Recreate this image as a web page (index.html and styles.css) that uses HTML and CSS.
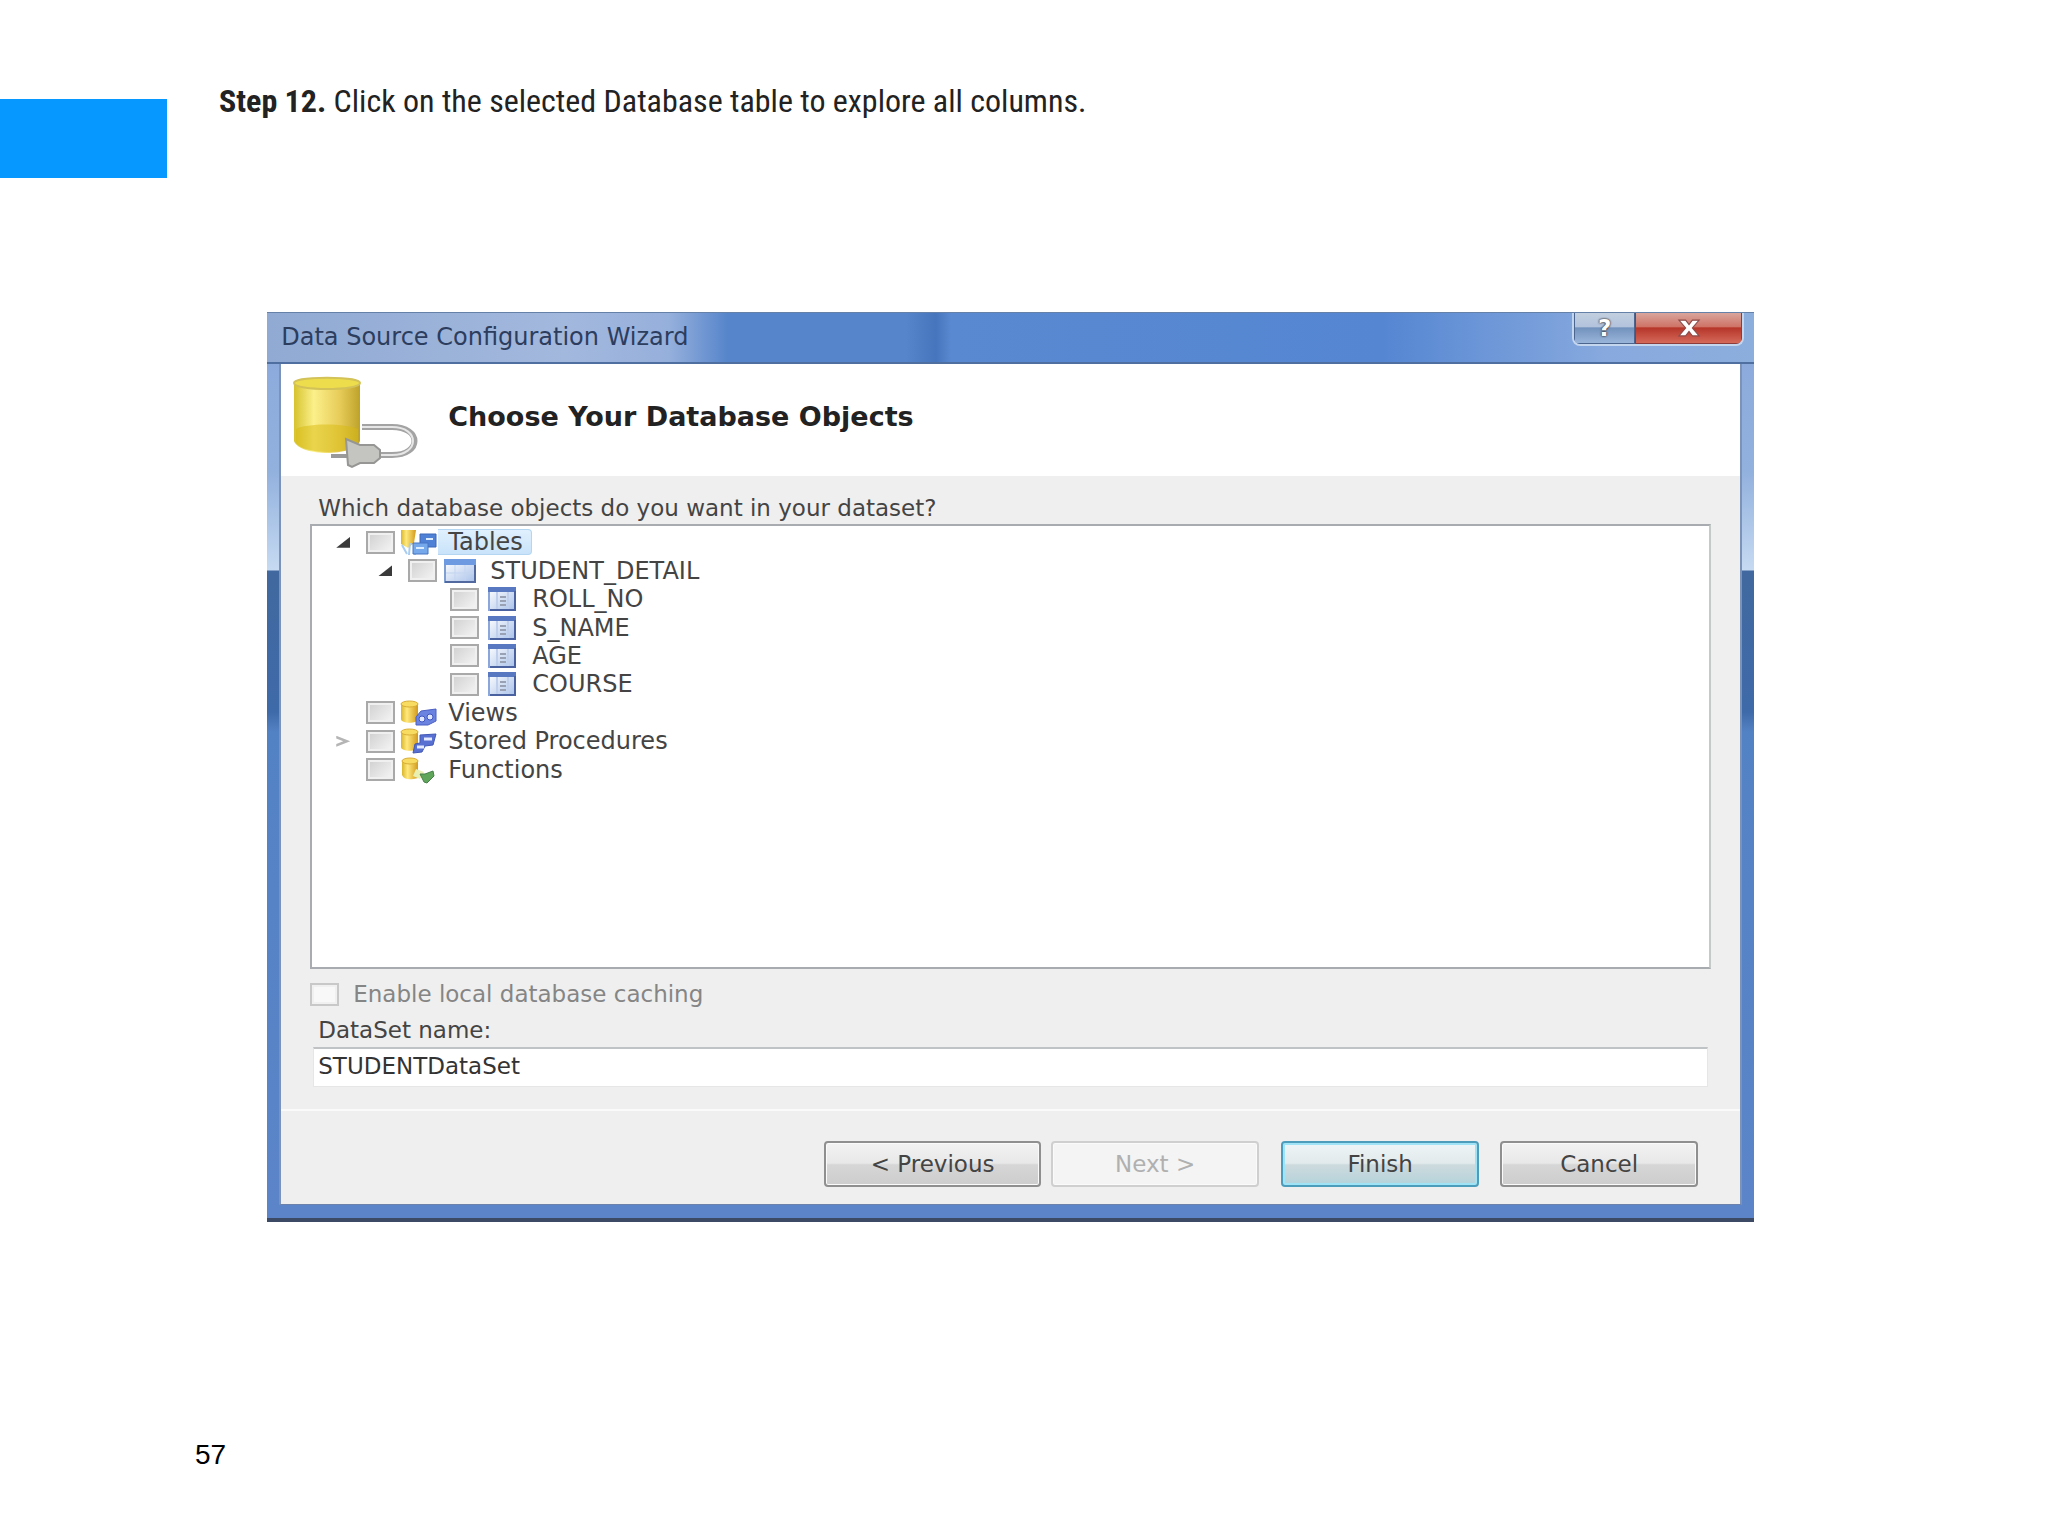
FILE: index.html
```
<!DOCTYPE html>
<html lang="en">
  <head>
    <meta charset="UTF-8" />
    <meta name="viewport" content="width=device-width, initial-scale=1.0" />
    <title>Step 12</title>
    <link rel="stylesheet" href="styles.css">
  </head>
  <body>
    <!-- shared tree icons -->
    <svg class="sprite" aria-hidden="true">
      <defs>
        <linearGradient id="gold" x1="0" x2="1">
          <stop offset="0" stop-color="#d9b52c" />
          <stop offset="0.35" stop-color="#ffe97c" />
          <stop offset="1" stop-color="#d39a1c" />
        </linearGradient>
        <linearGradient id="pane" x1="0" x2="1" y2="1">
          <stop offset="0" stop-color="#ffffff" />
          <stop offset="1" stop-color="#a9c2ea" />
        </linearGradient>
        <symbol id="i-can" viewBox="0 0 40 28">
          <path d="M3 5v15c0 5 17 5 17 0V5z" fill="url(#gold)" />
          <ellipse cx="11.500" cy="5" rx="8.500" ry="3" fill="#f8dc62" stroke="#d8ad35" />
        </symbol>
        <symbol id="i-tables" viewBox="0 0 40 28">
          <path d="M3 2h15l-2 13-6 5-7-4z" fill="url(#gold)" />
          <path d="M4 17l5 9M12 15l-1 12M17 17v10" stroke="#a8cdf0" stroke-width="2" />
          <path d="M22 6h16v13H22z" fill="#4f82d6" stroke="#3e68b8" />
          <path d="M15 15h15v11H15z" fill="#76a9ec" stroke="#4774c2" />
          <path d="M18 20h8M28 11h7" stroke="#dcecff" stroke-width="2" />
        </symbol>
        <symbol id="i-views" viewBox="0 0 40 28">
          <use href="#i-can" width="40" height="28" />
          <path d="M23 12l15-2v12l-8 4H18v-8z" fill="#6a83e0" stroke="#4b5fc4" />
          <circle cx="24" cy="20" r="3" fill="#dfe6ff" stroke="#3f55bd" />
          <circle cx="32" cy="18" r="3" fill="#dfe6ff" stroke="#3f55bd" />
        </symbol>
        <symbol id="i-procs" viewBox="0 0 40 28">
          <use href="#i-can" width="40" height="28" />
          <path d="M22 8l16-1-3 11-8 1-3 6-9 1 2-9 5-1z" fill="#5870d2" stroke="#4258b5" />
          <path d="M26 12h8M19 20h7" stroke="#e4eaff" stroke-width="3" />
        </symbol>
        <symbol id="i-funcs" viewBox="0 0 40 28">
          <path d="M4 5v14c2 5 8 5 16 3V5z" fill="url(#gold)" />
          <ellipse cx="12" cy="5" rx="8" ry="3" fill="#f8dc62" stroke="#d8ad35" />
          <path d="M18 13l8 3-4 7-7-3z" fill="#e9efb0" />
          <path d="M22 18h5l8-3 1 5-7 7-3-1z" fill="#5fa65a" stroke="#47804a" />
        </symbol>
        <symbol id="i-table" viewBox="0 0 32 24">
          <path d="M1 1h30v22H1z" fill="url(#pane)" stroke="#7f9ed2" stroke-width="2" />
          <path d="M0 0h32v6H0z" fill="#6d9ae0" />
          <path d="M11 6v16M21 6v16M2 14h28" stroke="#c3d5f0" />
          <path d="M31 6v17H1" fill="none" stroke="#51699f" stroke-width="2" />
        </symbol>
        <symbol id="i-column" viewBox="0 0 28 24">
          <path d="M1 1h26v22H1z" fill="url(#pane)" stroke="#8aa6da" stroke-width="2" />
          <path d="M0 0h28v5H0z" fill="#5878c2" />
          <path d="M9 5v17M20 5v17" stroke="#c0d0ec" stroke-width="2" />
          <path d="M12 10h6M12 14h6M12 18h6" stroke="#98a2b4" stroke-width="2" />
          <path d="M27 4v19H2" fill="none" stroke="#4a63a0" stroke-width="2" />
        </symbol>
      </defs>
    </svg>

    <main class="slide">
      <header class="slide-head">
        <div class="accent"></div>
        <h1><b>Step 12.</b> Click on the selected Database table to explore all columns.</h1>
      </header>

      <section class="dialog">
        <div class="titlebar">
          <h2>Data Source Configuration Wizard</h2>
          <div class="window-buttons">
            <button class="help" aria-label="Help">?</button>
            <button class="close" aria-label="Close">
              <svg width="24" height="18" viewBox="0 0 20 16">
                <path d="M1 1h6l3 4 3-4h6l-6 7 6 7h-6l-3-4-3 4H1l6-7z" fill="#fff" stroke="#8c4a48" />
              </svg>
            </button>
          </div>
        </div>

        <div class="client">
          <div class="banner">
            <svg class="db-icon" width="130" height="96" viewBox="0 0 130 96">
              <defs>
                <linearGradient id="drum" x1="0" x2="1">
                  <stop offset="0" stop-color="#d6c32e" />
                  <stop offset="0.3" stop-color="#fbf08a" />
                  <stop offset="0.7" stop-color="#e7cb58" />
                  <stop offset="1" stop-color="#bda22a" />
                </linearGradient>
              </defs>
              <path d="M2 8v58c6 16 60 16 66 0V8z" fill="url(#drum)" />
              <path d="M4 54c10-6 50-6 62 0v14c-8 12-52 12-62 0z" fill="#d8b90f" opacity="0.5" />
              <path d="M2 8C2 1 68 1 68 8c0 8-66 8-66 0z" fill="#eddc4c" stroke="#d2c258" stroke-width="2" />
              <path d="M70 52h30c30 0 30 28 0 28H84" fill="none" stroke="#a3a3a3" stroke-width="6" />
              <path d="M70 52h30c28 0 28 28 0 28H84" fill="none" stroke="#e6e6e6" stroke-width="2" />
              <path d="M39 81h18" stroke="#9a9a9a" stroke-width="4" />
              <path d="M54 64l14 6h14l6 5v8l-6 5H68l-8 4-4-2z" fill="#c4c5c1" stroke="#969794" stroke-width="2" />
            </svg>
            <h3>Choose Your Database Objects</h3>
          </div>

          <form class="page">
            <p class="question" id="tree-label">Which database objects do you want in your dataset?</p>
            <ul class="tree" aria-labelledby="tree-label">
              <li class="selected">
                <span class="arrow open"></span>
                <label><input type="checkbox"><svg class="icon"><use href="#i-tables" /></svg><span>Tables</span></label>
              </li>
              <li class="level-1">
                <span class="arrow open"></span>
                <label><input type="checkbox"><svg class="icon"><use href="#i-table" /></svg><span>STUDENT_DETAIL</span></label>
              </li>
              <li class="level-2">
                <span class="arrow"></span>
                <label><input type="checkbox"><svg class="icon"><use href="#i-column" /></svg><span>ROLL_NO</span></label>
              </li>
              <li class="level-2">
                <span class="arrow"></span>
                <label><input type="checkbox"><svg class="icon"><use href="#i-column" /></svg><span>S_NAME</span></label>
              </li>
              <li class="level-2">
                <span class="arrow"></span>
                <label><input type="checkbox"><svg class="icon"><use href="#i-column" /></svg><span>AGE</span></label>
              </li>
              <li class="level-2">
                <span class="arrow"></span>
                <label><input type="checkbox"><svg class="icon"><use href="#i-column" /></svg><span>COURSE</span></label>
              </li>
              <li>
                <span class="arrow"></span>
                <label><input type="checkbox"><svg class="icon"><use href="#i-views" /></svg><span>Views</span></label>
              </li>
              <li>
                <span class="arrow closed"></span>
                <label><input type="checkbox"><svg class="icon"><use href="#i-procs" /></svg><span>Stored Procedures</span></label>
              </li>
              <li>
                <span class="arrow"></span>
                <label><input type="checkbox"><svg class="icon"><use href="#i-funcs" /></svg><span>Functions</span></label>
              </li>
            </ul>
            <label class="caching"><input type="checkbox" disabled>Enable local database caching</label>
            <label class="name-label" for="dataset-name">DataSet name:</label>
            <input class="name-input" type="text" id="dataset-name" value="STUDENTDataSet">
          </form>

          <footer class="actions">
            <button class="previous">&lt; Previous</button>
            <button class="next" disabled>Next &gt;</button>
            <button class="finish">Finish</button>
            <button class="cancel">Cancel</button>
          </footer>
        </div>
      </section>

      <p class="page-number">57</p>
    </main>
  </body>
</html>
```
FILE: styles.css
```
* {
  box-sizing: border-box;
}
body {
  margin: 0;
  background: #fff;
  color: #444;
  font-family: "DejaVu Sans", sans-serif;
  font-size: 23px;
  line-height: 28px;
}
h1,
h2,
h3,
p,
ul {
  margin: 0;
  padding: 0;
}
button,
input {
  font: inherit;
  color: inherit;
}
.sprite {
  position: absolute;
  width: 0;
  height: 0;
}

/* slide */
.slide {
  min-height: 100vh;
  display: flex;
  flex-direction: column;
}
.slide-head {
  display: flex;
  align-items: flex-start;
  gap: 52px;
  padding-top: 80px;
  margin-bottom: 134px;
}
.accent {
  width: 167px;
  height: 79px;
  margin-top: 19px;
  background: #0697ff;
}
.slide-head h1 {
  font-family: "Liberation Sans Narrow", "Arial Narrow", "Roboto Condensed", "Liberation Sans", sans-serif;
  font-size: 32px;
  font-weight: 400;
  line-height: 42px;
  color: #222;
}
.page-number {
  margin: auto 0 63px 195px;
  font-family: "Liberation Sans", sans-serif;
  font-size: 28px;
  line-height: 36px;
  color: #000;
}

/* wizard window */
.dialog {
  margin: 0 14.35% 0 13.05%;
  padding: 0 12px 13px;
  border-bottom: 4px solid #3c4a66;
  background: linear-gradient(
    #7f9fd0 0,
    #8dabdc 60px,
    #92b1dd 160px,
    #c6daf2 258px,
    #41699f 259px,
    #3f6aa9 400px,
    #5382c4 420px,
    #5b85c8 100%
  );
}
.titlebar {
  display: flex;
  justify-content: space-between;
  align-items: flex-start;
  height: 52px;
  margin: 0 -12px;
  padding-right: 10px;
  border-top: 1px solid #6681a8;
  border-bottom: 2px solid #4e6f9f;
  background: linear-gradient(
    90deg,
    #90aad3 0,
    #a3b8dd 20%,
    #96b0dc 27%,
    #5685cb 31%,
    #5685cb 43%,
    #4775bd 45%,
    #5989d0 46%,
    #5586d2 75%,
    #87a9de 90%,
    #8caedd 100%
  );
}
.titlebar h2 {
  padding: 10px 0 0 14px;
  font-size: 24px;
  font-weight: 400;
  color: #2c3d5e;
}
.window-buttons {
  display: flex;
  height: 33px;
  border: 2px solid #c4d6ee;
  border-top: 0;
  border-radius: 0 0 8px 8px;
  overflow: hidden;
}
.window-buttons button {
  padding: 0;
  border: 1px solid #4c658f;
  border-top: 0;
}
.window-buttons .help {
  width: 61px;
  background: linear-gradient(#c2cfe0 0, #b3c3dc 45%, #7292bd 50%, #9ab5da 100%);
  color: #fff;
  font-weight: 700;
  text-shadow: 0 0 2px #333, 0 0 2px #333;
}
.window-buttons .close {
  width: 107px;
  border-color: #8e3b3c;
  background: linear-gradient(#d9a59c 0, #cf7467 45%, #b6362a 50%, #d4695a 100%);
}
.window-buttons svg {
  display: block;
  margin: auto;
}
.client {
  background: #efefef;
  border-left: 2px solid #7b93b9;
  border-right: 2px solid #7b93b9;
  border-bottom: 1px solid #6c82ab;
}
.banner {
  display: flex;
  align-items: flex-start;
  gap: 26px;
  height: 112px;
  padding: 11px 11px 0;
  background: #fff;
}
.banner h3 {
  margin-top: 28px;
  font-size: 27px;
  color: #222;
}

/* object tree */
.page {
  display: flex;
  flex-direction: column;
  padding: 18px 29px 22px;
  border-bottom: 2px solid #fafafa;
}
.question {
  padding-left: 8px;
  margin-bottom: 2px;
}
.tree {
  display: grid;
  grid-template-rows: repeat(9, 1fr);
  height: 445px;
  padding: 2px 0 183px;
  border: 2px solid #a8acb0;
  border-right-color: #c3cac7;
  background: #fff;
  font-size: 24px;
  list-style: none;
}
.tree li {
  display: flex;
  align-items: center;
  gap: 16px;
  padding-left: 24px;
}
.tree .level-1 {
  padding-left: 66px;
}
.tree .level-2 {
  padding-left: 108px;
}
.tree label {
  display: flex;
  align-items: center;
}
.tree label span {
  padding: 0 8px 0 10px;
}
.tree .selected label span {
  border: 1px solid #b4d6f2;
  border-left: 0;
  border-radius: 0 4px 4px 0;
  background: linear-gradient(#e0f0fd, #c9e3fa);
  line-height: 24px;
}
.tree .icon {
  width: 40px;
  height: 28px;
  margin-left: 3px;
}
.tree .level-1 .icon,
.tree .level-2 .icon {
  height: 24px;
}
.arrow {
  width: 14px;
  height: 11px;
}
.arrow.open {
  background: #3a3a3a;
  clip-path: polygon(100% 0, 100% 100%, 0 100%);
}
.arrow.closed {
  background: #b5b5b5;
  clip-path: polygon(0 0, 100% 50%, 0 100%, 0 75%, 50% 50%, 0 25%);
}
input[type="checkbox"] {
  appearance: none;
  width: 29px;
  height: 23px;
  margin: 0;
  border: 2px solid #a9a9a9;
  background: linear-gradient(135deg, #cfcfcf, #f6f6f6);
  box-shadow: inset 0 0 0 2px #f0f0f0;
}
.caching {
  display: flex;
  align-items: center;
  gap: 14px;
  margin-top: 11px;
  color: #858585;
}
.caching input[type="checkbox"] {
  border-color: #c8c8c8;
  background: #f8f8f8;
}
.name-label {
  margin-top: 8px;
  padding-left: 8px;
}
.name-input {
  height: 40px;
  margin: 3px 3px 0;
  padding: 0 4px 4px;
  border: 1px solid #e6e6e6;
  border-top: 2px solid #c0c3c6;
  background: #fff;
  color: #333;
}

/* wizard buttons */
.actions {
  display: flex;
  justify-content: flex-end;
  padding: 30px 42px 17px 0;
}
.actions button {
  width: 198px;
  height: 46px;
  border: 2px solid #8f8f8f;
  border-radius: 4px;
  background: linear-gradient(#f2f2f2 0, #e8e8e8 48%, #d6d6d6 52%, #cdcdcd 100%);
  box-shadow: inset 0 0 0 1px #fafafa;
}
.actions .previous {
  width: 217px;
  margin-right: 10px;
}
.actions .next {
  width: 208px;
  margin-right: 22px;
  border-color: #cfcfcf;
  background: #f4f4f4;
  color: #b0b0b0;
}
.actions .finish {
  margin-right: 21px;
  border-color: #4c9dbb;
  background: linear-gradient(#eef5f7 0, #e2eaec 48%, #cddadd 52%, #b4d3db 100%);
  box-shadow: inset 0 0 0 2px #9fe3f7;
}
```
